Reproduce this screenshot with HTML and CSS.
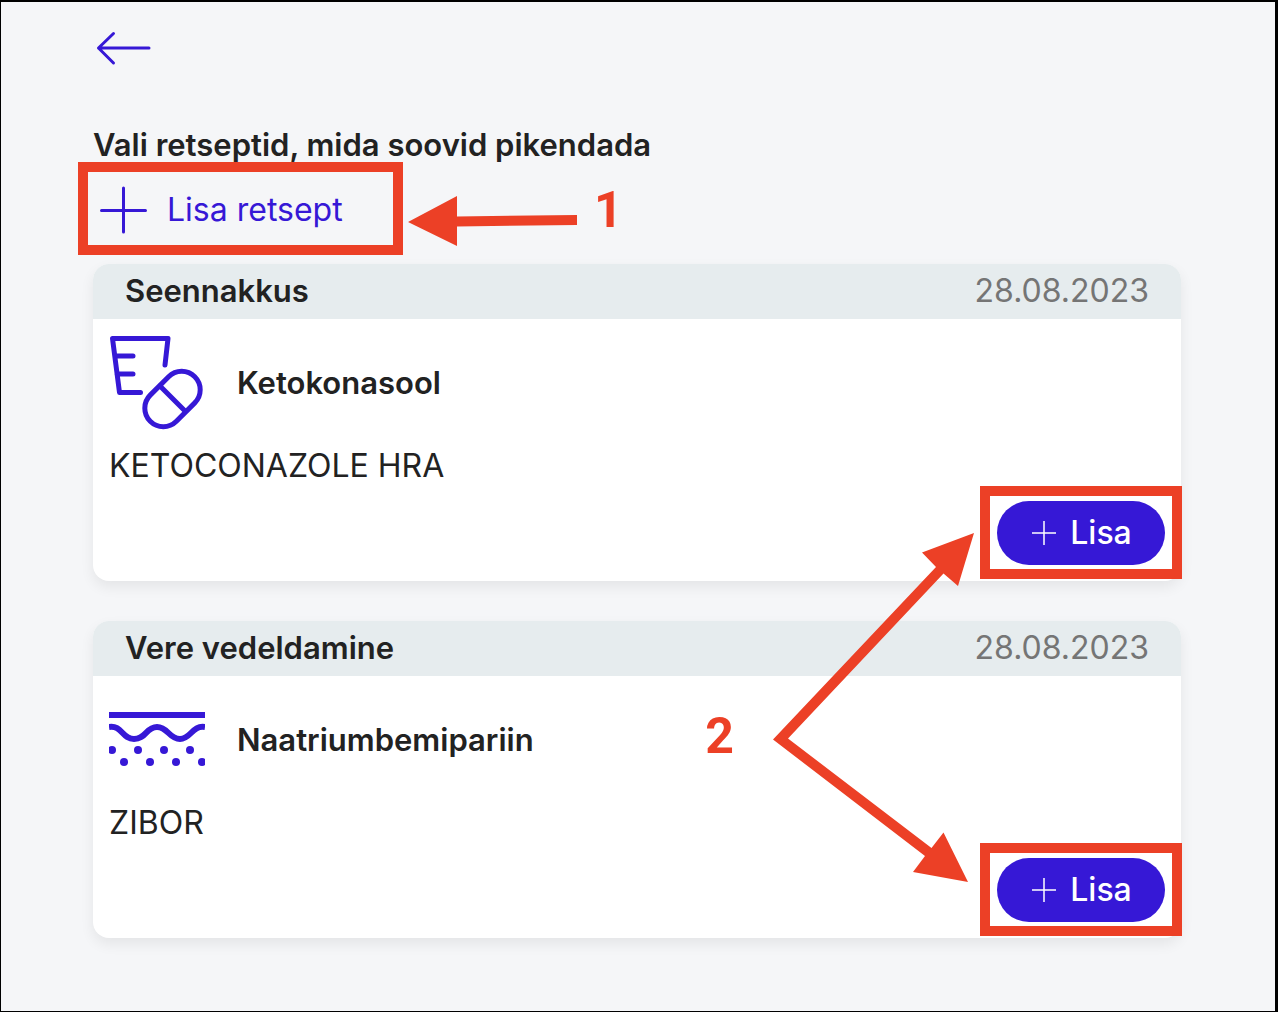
FILE: index.html
```html
<!DOCTYPE html>
<html lang="et">

<head>
    <meta charset="UTF-8">
    <meta name="viewport" content="width=device-width, initial-scale=1.0">
    <title>Retseptide pikendamine</title>
    <link rel="stylesheet" href="styles.css">
</head>

<body>
    <main class="page">
        <button class="back" type="button" aria-label="Tagasi">
            <svg viewBox="0 0 64 64" fill="none" stroke="currentColor" stroke-width="3" stroke-linecap="round" stroke-linejoin="round">
                <path d="M56 32H5.500M20.500 17.500L5.500 32L20.500 47" />
            </svg>
        </button>

        <h1 class="title">Vali retseptid, mida soovid pikendada</h1>

        <div class="add-row">
            <div class="callout callout-add">
                <button class="add-button" type="button">
                    <svg class="add-icon" viewBox="0 0 48 48" fill="none" stroke="currentColor" stroke-width="3" stroke-linecap="round">
                        <path d="M24.500 2V46M2.500 24.500H46.500" />
                    </svg>
                    Lisa retsept
                </button>
            </div>
            <!-- step 1 arrow -->
            <svg class="arrow-one" viewBox="0 0 170 50">
                <path d="M0 26L49 0V20.500L169 19V29L49 30.500V50Z" />
            </svg>
            <span class="step step-one">1</span>
        </div>

        <section class="list">
            <article class="card">
                <header class="card-header">
                    <h2 class="card-title">Seennakkus</h2>
                    <time class="card-date" datetime="2023-08-28">28.08.2023</time>
                </header>
                <div class="card-body">
                    <div class="drug">
                        <svg class="drug-icon" viewBox="0 0 96 96" fill="none" stroke="currentColor" stroke-width="5" stroke-linecap="round" stroke-linejoin="round">
                            <path d="M56 30L59 3.500H3.500L10.500 57.500H31.500M7 21H24M8 39H24" />
                            <rect x="32" y="45.500" width="63" height="37" rx="18.500" transform="rotate(-45 63.500 64)" />
                            <path d="M51 51L76 76" />
                        </svg>
                        <h3 class="drug-name">Ketokonasool</h3>
                    </div>
                    <p class="brand">KETOCONAZOLE HRA</p>
                    <div class="actions">
                        <div class="callout callout-pick">
                            <button class="pick-button" type="button">
                                <svg class="pick-icon" viewBox="0 0 24 24" fill="none" stroke="currentColor" stroke-width="1.500">
                                    <path d="M12 0V24M0 12H24" />
                                </svg>
                                Lisa
                            </button>
                        </div>
                    </div>
                </div>
            </article>

            <article class="card">
                <header class="card-header">
                    <h2 class="card-title">Vere vedeldamine</h2>
                    <time class="card-date" datetime="2023-08-28">28.08.2023</time>
                </header>
                <div class="card-body">
                    <div class="drug">
                        <svg class="drug-icon" viewBox="0 0 96 96" fill="none" stroke="currentColor" stroke-width="6">
                            <path d="M0 23H96" />
                            <path d="M0 35C13 33 13 47 25 47S37 35 48 35S60 47 71 47S83 33 96 35" />
                            <g fill="currentColor" stroke="none">
                                <circle cx="3" cy="58" r="4" />
                                <circle cx="29" cy="58" r="4" />
                                <circle cx="55" cy="58" r="4" />
                                <circle cx="81" cy="58" r="4" />
                                <circle cx="15" cy="70" r="4" />
                                <circle cx="41" cy="70" r="4" />
                                <circle cx="67" cy="70" r="4" />
                                <circle cx="93" cy="70" r="4" />
                            </g>
                        </svg>
                        <h3 class="drug-name">Naatriumbemipariin</h3>
                    </div>
                    <p class="brand">ZIBOR</p>
                    <div class="actions">
                        <div class="callout callout-pick">
                            <button class="pick-button" type="button">
                                <svg class="pick-icon" viewBox="0 0 24 24" fill="none" stroke="currentColor" stroke-width="1.500">
                                    <path d="M12 0V24M0 12H24" />
                                </svg>
                                Lisa
                            </button>
                        </div>
                    </div>
                </div>
            </article>

            <!-- step 2 arrows, one to each Lisa button -->
            <svg class="arrow-two" viewBox="0 0 202 350">
                <path d="M0 206.500L163 34L149 19.500L201 0L185 53L170.500 40.500L15 205.500L158.500 315L170.500 299.500L195 349L140 339L152 323Z" />
            </svg>
            <span class="step step-two">2</span>
        </section>
    </main>
</body>

</html>
```

FILE: styles.css
```css
* {
    box-sizing: border-box;
}

body {
    margin: 0;
    background-color: #f5f6f8;
    color: #222;
    font-family: "Inter", "Liberation Sans", sans-serif;
    font-size: 32px;
    line-height: 38px;
}

h1,
h2,
h3 {
    margin: 0;
    font-size: 31px;
    font-weight: 600;
}

button {
    border: none;
    padding: 0;
    background: none;
    font: inherit;
    cursor: pointer;
}

svg {
    display: block;
    flex: none;
}

.page {
    min-height: 100vh;
    padding: 14px 94px 40px 92px;
    border: solid #000;
    border-width: 2px 3px 1px 1px;
}

.back {
    display: block;
    width: 64px;
    height: 64px;
    margin-bottom: 46px;
    color: #3618d6;
}

.add-row {
    position: relative;
    display: flex;
    margin: 14px 0 22px;
}

.add-button {
    display: flex;
    align-items: center;
    gap: 20px;
    min-width: 295px;
    height: 64px;
    padding-left: 6px;
    color: #3618d6;
}

.add-icon {
    width: 48px;
    height: 48px;
}

/* red frame around a button */
.callout {
    position: relative;
}

.callout::after {
    content: "";
    position: absolute;
    border: 10px solid #ec4026;
    pointer-events: none;
}

.callout-add::after {
    inset: -16px -15px -13px;
}

.callout-pick::after {
    inset: -15px -17px -14px;
}

.step {
    position: absolute;
    color: #ec4026;
    font-family: Roboto, "Liberation Sans", sans-serif;
    font-size: 50px;
    font-weight: 700;
    line-height: 50px;
}

.step-one {
    left: 501px;
    top: 7px;
}

.step-two {
    right: 447px;
    top: 447px;
}

.arrow-one,
.arrow-two {
    position: absolute;
    fill: #ec4026;
    pointer-events: none;
}

.arrow-one {
    left: 315px;
    top: 18px;
    width: 170px;
}

.arrow-two {
    right: 206px;
    top: 269px;
    width: 202px;
}

.list {
    position: relative;
    display: flex;
    flex-direction: column;
    gap: 40px;
}

.card {
    border-radius: 16px;
    background-color: #fff;
    box-shadow: 0 6px 14px rgba(0, 0, 0, 0.07);
}

.card-header {
    display: flex;
    justify-content: space-between;
    align-items: center;
    height: 55px;
    padding: 0 32px 2px;
    border-radius: 16px 16px 0 0;
    background-color: #e6ecee;
}

.card-date {
    color: #757575;
}

.card-body {
    padding: 16px;
}

.drug {
    display: flex;
    align-items: center;
    gap: 32px;
}

.drug-icon {
    width: 96px;
    height: 96px;
    color: #3618d6;
}

.brand {
    margin: 16px 0;
}

.actions {
    display: flex;
    justify-content: flex-end;
}

.pick-button {
    display: flex;
    justify-content: center;
    align-items: center;
    gap: 14px;
    min-width: 168px;
    height: 64px;
    padding-left: 2px;
    border-radius: 32px;
    background-color: #3618d6;
    color: #fff;
    font-weight: 500;
}

.pick-icon {
    width: 24px;
    height: 24px;
}
```
